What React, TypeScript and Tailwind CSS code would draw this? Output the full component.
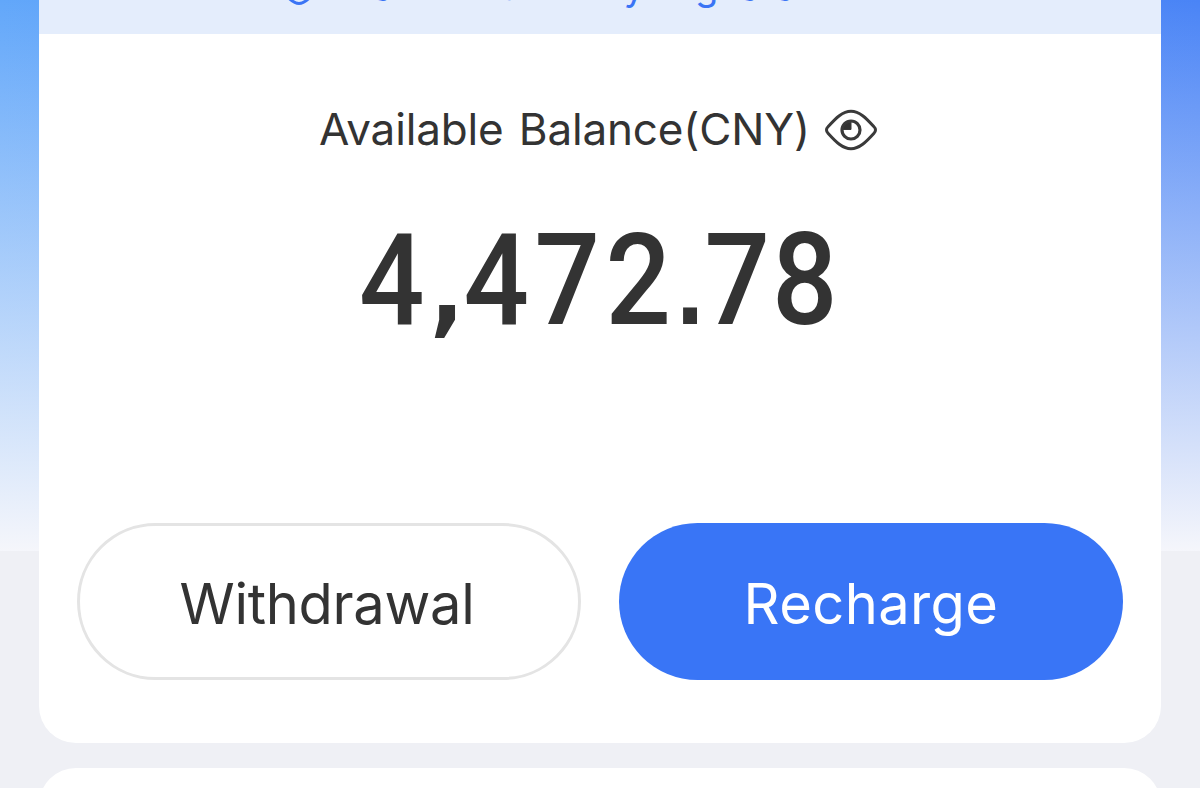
function ShieldIcon() {
  return (
    <svg className="h-[39px] w-8 shrink-0" viewBox="0 0 32 39" fill="none" stroke="#3a74f5" strokeWidth="3">
      <path d="M16 2 30 7v17c0 5-8.500 12.500-14 12.500S2 29 2 24V7Z" strokeLinejoin="round" />
    </svg>
  );
}

function EyeIcon() {
  return (
    <svg className="mt-[2px] h-[42px] w-[54px] shrink-0" viewBox="0 0 54 42" fill="none" stroke="#3a3a3a">
      <path
        d="M2.500 21Q2.500 19.300 4 17.800C12 9 18.500 2.300 27 2.300S42 9 50 17.800Q51.500 19.300 51.500 21T50 24.200C42 33 35.500 39.700 27 39.700S12 33 4 24.200Q2.500 22.700 2.500 21Z"
        strokeWidth="3"
      />
      <circle cx="27" cy="21" r="9" strokeWidth="3.200" />
      <path d="M27 20.500V13A8 8 0 0 0 19 20.500Z" fill="#333333" strokeWidth="1" />
    </svg>
  );
}

export default function App() {
  return (
    <div className="h-[788px] w-[1200px] overflow-hidden bg-[#eff0f5] font-['Inter','Liberation_Sans',sans-serif] text-[#333333]">
      <div className="h-[551px] bg-linear-to-r from-[#62a7fa] to-[#4a84f6]">
        <div className="h-[551px] bg-linear-to-b from-[#f5f6fb]/0 to-[#f5f6fb] px-[39px]">
          <main className="flex h-[743px] flex-col overflow-hidden rounded-b-[37px] bg-white">
            <div className="flex h-[34px] shrink-0 items-end justify-center bg-[#e4edfc] pb-[26px] text-[#3a74f5]">
              <div className="flex w-[634px] items-center gap-[22px]">
                <ShieldIcon />
                <span className="shrink-0 text-[38px] leading-[44px] tracking-[-0.13px] whitespace-nowrap">Transfer Security is guaranteed</span>
              </div>
            </div>
            <div className="mt-[65px] flex h-[60px] shrink-0 items-center pl-[280px]">
              <span className="w-[505px] shrink-0 text-[44px] leading-[60px] tracking-[-0.15px] whitespace-nowrap [word-spacing:3px]">
                Available Balance(CNY)
              </span>
              <EyeIcon />
            </div>
            <div className="mt-[46px] flex h-[150px] w-[540px] shrink-0 origin-left translate-x-[320px] scale-x-[0.9] items-baseline font-['Roboto',sans-serif] text-[128px] leading-[150px] font-medium">
              <span className="w-[73px]">4</span>
              <span className="w-[43px] pl-[6px] font-['DejaVu_Sans',sans-serif] text-[100px] font-bold">,</span>
              <span className="w-[79px]">4</span>
              <span className="w-[79px]">7</span>
              <span className="w-[75px]">2</span>
              <span className="w-[35px] pl-[2px] font-['DejaVu_Sans',sans-serif] text-[88px] font-bold">.</span>
              <span className="w-[75px]">7</span>
              <span>8</span>
            </div>
            <div className="mt-[168px] flex shrink-0 gap-[38px] px-[38px]">
              <button className="h-[157px] w-[504px] rounded-full border-3 border-[#e4e4e4] pt-[5px] pr-[4px] text-[56px] tracking-[-0.3px]">Withdrawal</button>
              <button className="h-[157px] w-[504px] rounded-full bg-[#3975f6] pt-[5px] text-[56px] tracking-[0.4px] text-white">Recharge</button>
            </div>
          </main>
          <section className="mt-[25px] h-20 rounded-t-[37px] bg-white" />
        </div>
      </div>
    </div>
  );
}
